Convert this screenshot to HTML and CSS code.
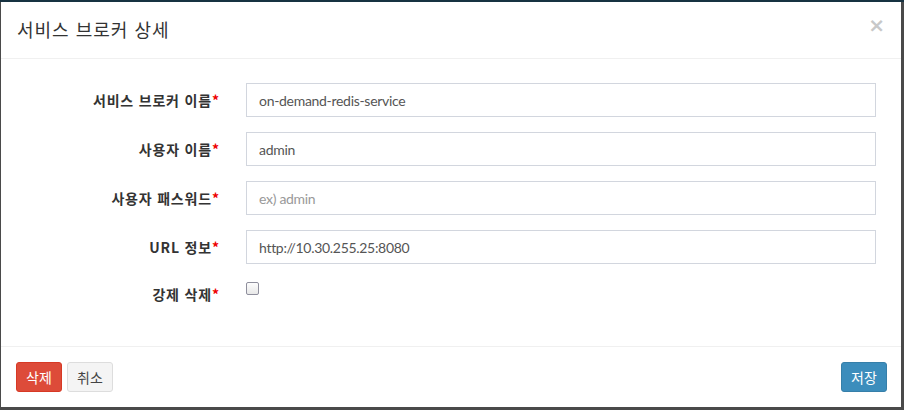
FILE: index.html
```html
<!DOCTYPE html>
<html lang="ko">
<head>
<meta charset="utf-8">
<title>서비스 브로커 상세</title>
<link rel="stylesheet" href="styles.css">
</head>
<body>
<div class="modal">
  <div class="modal-header">
    <h4 class="modal-title">서비스 브로커 상세</h4>
    <button class="close" type="button">×</button>
  </div>
  <div class="modal-body">
    <div class="form-row">
      <label class="control-label">서비스 브로커 이름<span class="req">*</span></label>
      <input class="form-control" type="text" value="on-demand-redis-service">
    </div>
    <div class="form-row">
      <label class="control-label">사용자 이름<span class="req">*</span></label>
      <input class="form-control" type="text" value="admin">
    </div>
    <div class="form-row">
      <label class="control-label">사용자 패스워드<span class="req">*</span></label>
      <input class="form-control" type="password" placeholder="ex) admin">
    </div>
    <div class="form-row">
      <label class="control-label">URL 정보<span class="req">*</span></label>
      <input class="form-control" type="text" value="http://10.30.255.25:8080">
    </div>
    <div class="form-row check-row">
      <label class="control-label">강제 삭제<span class="req">*</span></label>
      <span class="checkbox"></span>
    </div>
  </div>
  <div class="modal-footer">
    <div class="left-btns">
      <button class="btn btn-danger" type="button">삭제</button>
      <button class="btn btn-default" type="button">취소</button>
    </div>
    <button class="btn btn-primary" type="button">저장</button>
  </div>
</div>
</body>
</html>
```
FILE: styles.css
```css
* { box-sizing: border-box; }
html, body { margin: 0; padding: 0; }
body {
  width: 904px;
  height: 410px;
  overflow: hidden;
  background: linear-gradient(to bottom, #173241 0, #173241 2px, #4a4a4a 2px, #4a4a4a 100%);
  font-family: "Lato", "Noto Sans CJK KR", sans-serif;
  color: #333;
  padding: 2px 3px 3px 1px;
}
.modal {
  width: 900px;
  height: 405px;
  background: #fff;
  display: flex;
  flex-direction: column;
}
.modal-header {
  height: 57px;
  padding: 15px 16px 0 16px;
  border-bottom: 1px solid #f0f0f0;
  display: flex;
  justify-content: space-between;
  align-items: flex-start;
}
.modal-title {
  margin: 0;
  font-family: "Noto Sans CJK KR", sans-serif;
  font-weight: 400;
  font-size: 18px;
  line-height: 25px;
  letter-spacing: 1px;
  color: #333;
}
.close {
  border: 0;
  background: none;
  padding: 0;
  margin-top: -3px;
  font-family: "DejaVu Sans", sans-serif;
  font-size: 20px;
  font-weight: 700;
  line-height: 22px;
  color: #c8c8c8;
}
.modal-body {
  flex: 1;
  padding: 24px 24px 0 0;
  display: flex;
  flex-direction: column;
  gap: 15px;
}
.form-row {
  display: grid;
  grid-template-columns: 218px 630px;
  column-gap: 27px;
  align-items: start;
}
.control-label {
  text-align: right;
  font-family: "Noto Sans CJK KR", sans-serif;
  font-weight: 700;
  font-size: 14px;
  line-height: 20px;
  letter-spacing: 0.8px;
  padding-top: 7px;
  color: #333;
}
.req { color: #e00; letter-spacing: 0; }
.form-control {
  height: 34px;
  width: 630px;
  border: 1px solid #d2d6de;
  border-radius: 0;
  padding: 6px 12px;
  font-family: "Lato", "Noto Sans CJK KR", sans-serif;
  font-size: 14px;
  letter-spacing: -0.3px;
  color: #555;
  background: #fff;
  outline: none;
}
.form-control::placeholder { color: #999; }
.check-row .control-label { padding-top: 5px; }
.checkbox {
  display: block;
  width: 13px;
  height: 13px;
  margin-top: 3px;
  border: 1px solid #8f8f9d;
  border-radius: 2px;
  background: linear-gradient(#fdfdfd, #e8e8e8);
}
.modal-footer {
  height: 61px;
  border-top: 1px solid #f0f0f0;
  padding: 15px 14px 15px 15px;
  display: flex;
  justify-content: space-between;
  align-items: center;
}
.left-btns { display: flex; gap: 5px; }
.btn {
  width: 46px;
  height: 30px;
  border: 1px solid transparent;
  border-radius: 3px;
  font-family: "Noto Sans CJK KR", sans-serif;
  font-size: 14px;
  line-height: 1;
  padding: 0;
  display: flex;
  align-items: center;
  justify-content: center;
}
.btn-danger { background: #dd4b39; border-color: #d73925; color: #fff; }
.btn-default { background: #f4f4f4; border-color: #ddd; color: #444; }
.btn-primary { background: #3c8dbc; border-color: #367fa9; color: #fff; }
```
